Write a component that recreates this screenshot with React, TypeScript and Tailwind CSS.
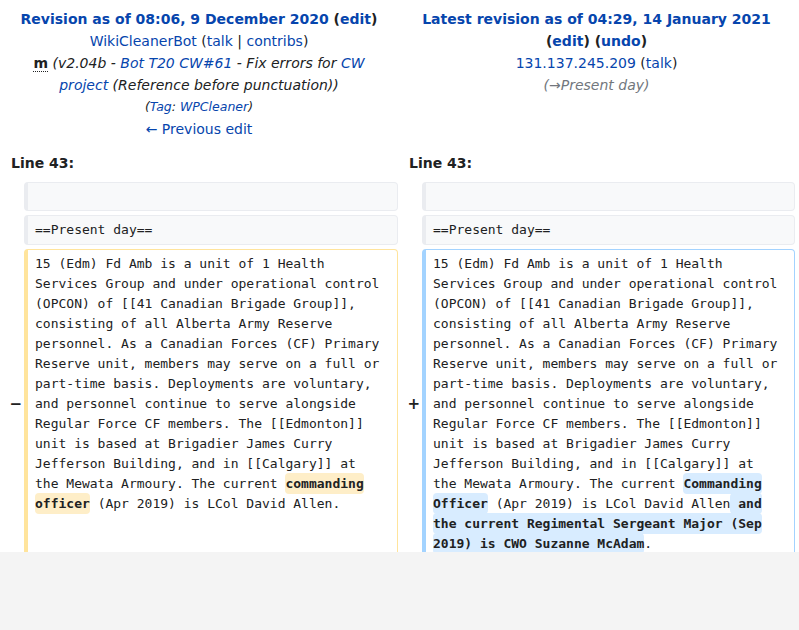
import React from "react";

const A = ({ children, bold }: { children: React.ReactNode; bold?: boolean }) => (
  <span className={`text-[#0645ad] ${bold ? "font-bold" : ""}`}>{children}</span>
);

const Del = ({ children }: { children: React.ReactNode }) => (
  <span className="bg-[#feeec8] font-bold rounded-[4px] py-[3px] box-decoration-clone">{children}</span>
);
const Add = ({ children }: { children: React.ReactNode }) => (
  <span className="bg-[#d8ecff] font-bold rounded-[4px] py-[3px] box-decoration-clone">{children}</span>
);

const mono = "font-['DejaVu_Sans_Mono',monospace] text-[13px] leading-[20px] text-[#202122]";

export default function App() {
  return (
    <div className="min-h-[630px] bg-[#f4f4f4] font-['DejaVu_Sans',sans-serif] text-[#202122]">
      <div className="h-[552px] overflow-hidden bg-white">
        <div className="grid grid-cols-[24px_374px_24px_373px] gap-y-[4px] pt-[8px]">
          {/* Headers */}
          <div className="col-span-2 px-2 text-center text-[14px] leading-[22px]">
            <div className="font-bold">
              <A>Revision as of 08:06, 9 December 2020</A> (<A>edit</A>)
            </div>
            <div>
              <A>WikiCleanerBot</A> (<A>talk</A> | <A>contribs</A>)
            </div>
            <div className="px-[12px]">
              <abbr className="font-bold no-underline border-b border-dotted border-[#202122]" title="minor">m</abbr>{" "}
              <span className="italic">
                (v2.04b - <A>Bot T20 CW#61</A> - Fix errors for <A>CW project</A> (Reference before punctuation))
              </span>
            </div>
            <div className="italic text-[12.5px]">
              (<A>Tag</A>: <A>WPCleaner</A>)
            </div>
            <div>
              <A>← Previous edit</A>
            </div>
          </div>
          <div className="col-span-2 px-2 text-center text-[14px] leading-[22px]">
            <div className="font-bold">
              <A>Latest revision as of 04:29, 14 January 2021</A> (<A>edit</A>) (<A>undo</A>)
            </div>
            <div>
              <A>131.137.245.209</A> (<A>talk</A>)
            </div>
            <div className="italic text-[#72777d]">(→Present day)</div>
          </div>

          {/* Line numbers */}
          <div className="col-span-2 pl-[11px] mt-[8px] mb-[4px] font-bold text-[14px] leading-[22px]">Line 43:</div>
          <div className="col-span-2 pl-[11px] mt-[8px] mb-[4px] font-bold text-[14px] leading-[22px]">Line 43:</div>

          {/* Context empty */}
          <div />
          <div className="h-[29px] rounded-[4px] border border-[#eaecf0] border-l-4 bg-[#f8f9fa]" />
          <div />
          <div className="h-[29px] rounded-[4px] border border-[#eaecf0] border-l-4 bg-[#f8f9fa]" />

          {/* Context line */}
          <div />
          <div className={`rounded-[4px] border border-[#eaecf0] border-l-4 bg-[#f8f9fa] pl-[7px] py-[4px] ${mono}`}>==Present day==</div>
          <div />
          <div className={`rounded-[4px] border border-[#eaecf0] border-l-4 bg-[#f8f9fa] pl-[7px] py-[4px] ${mono}`}>==Present day==</div>

          {/* Changed line */}
          <div className="flex items-center justify-end pr-[2px] text-[15px] font-bold">−</div>
          <div className={`rounded-[4px] border border-[#ffe49c] border-l-4 bg-white pl-[7px] pr-[14px] py-[4px] ${mono}`}>
            15 (Edm) Fd Amb is a unit of 1 Health Services Group and under operational control (OPCON) of [[41 Canadian
            Brigade Group]], consisting of all Alberta Army Reserve personnel. As a Canadian Forces (CF) Primary
            Reserve unit, members may serve on a full or part-time basis. Deployments are voluntary, and personnel
            continue to serve alongside Regular Force CF members. The [[Edmonton]] unit is based at Brigadier James
            Curry Jefferson Building, and in [[Calgary]] at the Mewata Armoury. The current <Del>commanding officer</Del>{" "}
            (Apr 2019) is LCol David Allen.
          </div>
          <div className="flex items-center justify-end pr-[2px] text-[15px] font-bold">+</div>
          <div className={`rounded-[4px] border border-[#a3d3ff] border-l-4 bg-white pl-[7px] pr-[13px] py-[4px] ${mono}`}>
            15 (Edm) Fd Amb is a unit of 1 Health Services Group and under operational control (OPCON) of [[41 Canadian
            Brigade Group]], consisting of all Alberta Army Reserve personnel. As a Canadian Forces (CF) Primary
            Reserve unit, members may serve on a full or part-time basis. Deployments are voluntary, and personnel
            continue to serve alongside Regular Force CF members. The [[Edmonton]] unit is based at Brigadier James
            Curry Jefferson Building, and in [[Calgary]] at the Mewata Armoury. The current <Add>Commanding Officer</Add>{" "}
            (Apr 2019) is LCol David Allen<Add> and the current Regimental Sergeant Major (Sep 2019) is CWO Suzanne McAdam</Add>.
          </div>
        </div>
      </div>
    </div>
  );
}
